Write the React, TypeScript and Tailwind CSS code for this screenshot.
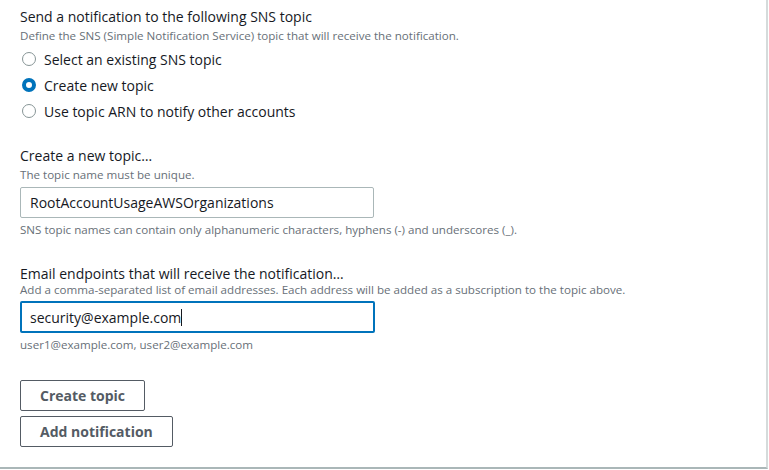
import React from "react";

function Radio({ checked, label }: { checked?: boolean; label: string }) {
  return (
    <label className="flex items-center h-[26px]">
      {checked ? (
        <span className="w-[14px] h-[14px] rounded-full border-[4px] border-[#0073bb] bg-white mr-[8px] ml-[2px]" />
      ) : (
        <span className="w-[14px] h-[14px] rounded-full border border-[#879596] bg-white mr-[8px] ml-[2px]" />
      )}
      <span className="text-[14px] text-[#16191f]">{label}</span>
    </label>
  );
}

export default function App() {
  return (
    <div className="w-[769px] h-[470px] bg-white" style={{ fontFamily: '"Open Sans", "Noto Sans", sans-serif' }}>
      <div className="w-[768px] h-[469px] border-r-2 border-b-2 border-r-[#d5dbdb] border-b-[#aab7b8] pl-[20px] pt-[7px]">
        <div className="text-[14px] leading-[20px] text-[#16191f]">Send a notification to the following SNS topic</div>
        <div className="text-[11.6px] leading-[17px] text-[#687078]">
          Define the SNS (Simple Notification Service) topic that will receive the notification.
        </div>
        <div className="flex flex-col mt-[2px]">
          <Radio label="Select an existing SNS topic" />
          <Radio checked label="Create new topic" />
          <Radio label="Use topic ARN to notify other accounts" />
        </div>

        <div className="mt-[22px] text-[14px] leading-[20px] text-[#16191f]">Create a new topic…</div>
        <div className="text-[11.6px] leading-[17px] text-[#687078]">The topic name must be unique.</div>
        <div className="mt-[4px] w-[354px] h-[31px] border border-[#aab7b8] rounded-[2px] flex items-center px-[9px] text-[14px] text-[#16191f]">
          RootAccountUsageAWSOrganizations
        </div>
        <div className="mt-[4px] text-[11.6px] leading-[16px] text-[#687078]">
          SNS topic names can contain only alphanumeric characters, hyphens (-) and underscores (_).
        </div>

        <div className="mt-[26px] text-[14px] leading-[20px] text-[#16191f]">
          Email endpoints that will receive the notification…
        </div>
        <div className="-mt-[2px] text-[11.6px] leading-[16px] text-[#687078]">
          Add a comma-separated list of email addresses. Each address will be added as a subscription to the topic above.
        </div>
        <div className="mt-[3px] w-[355px] h-[32px] border-2 border-[#0073bb] rounded-[2px] flex items-center px-[8px] text-[14px] text-[#16191f]">
          security@example.com<span className="w-px h-[17px] bg-[#16191f]" />
        </div>
        <div className="mt-[4px] text-[11.6px] leading-[16px] text-[#687078]">user1@example.com, user2@example.com</div>

        <div className="mt-[27px] flex flex-col items-start gap-[5px]">
          <button className="h-[31px] px-[19px] border border-[#545b64] rounded-[2px] text-[14px] font-bold text-[#545b64] bg-white">
            Create topic
          </button>
          <button className="h-[31px] px-[19px] border border-[#545b64] rounded-[2px] text-[14px] font-bold text-[#545b64] bg-white">
            Add notification
          </button>
        </div>
      </div>
    </div>
  );
}
